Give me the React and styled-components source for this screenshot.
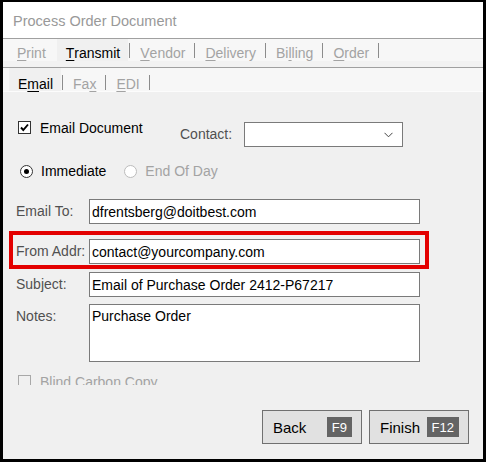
import React from 'react';
import styled, { createGlobalStyle } from 'styled-components';

const GlobalStyle = createGlobalStyle`
  html, body {
    margin: 0;
    padding: 0;
    background: #fff;
  }
  body {
    font-family: "Liberation Sans", Arial, sans-serif;
  }
`;

const Window = styled.div`
  width: 486px;
  height: 462px;
  box-sizing: border-box;
  border: 3px solid #000;
  border-top-width: 2px;
  background: #f0f0f0;
  display: flex;
  flex-direction: column;
  overflow: hidden;
  font-family: "Liberation Sans", Arial, sans-serif;
  font-size: 14px;
  color: #000;
`;

const TitleBar = styled.div`
  height: 36px;
  flex: none;
  box-sizing: border-box;
  padding: 1px 0 0 10px;
  display: flex;
  align-items: center;
  background: #fff;
  color: #999;
  font-size: 14.5px;
`;

const TabStrip = styled.div`
  flex: none;
  display: flex;
  align-items: stretch;
  height: ${(p) => p.$height}px;
  padding-left: ${(p) => p.$indent}px;
  background: #f7f7f7;
  border-top: ${(p) => (p.$topLine ? '1px solid #a0a0a0' : 'none')};
  border-bottom: ${(p) => (p.$bottomLine ? '1px solid #fcfcfc' : 'none')};
`;

const Band = styled.div`
  flex: none;
  height: 6px;
  background: #f2f2f2;
  border-bottom: 1px solid #a0a0a0;
`;

const Tab = styled.div`
  display: flex;
  align-items: center;
  padding: ${(p) => p.$top}px 8px 0 9px;
  background: ${(p) => (p.$active ? '#f0f0f0' : 'transparent')};
  color: ${(p) => (p.$active ? '#000' : '#a3a3a3')};
  white-space: nowrap;

  u {
    text-decoration-thickness: 1px;
    text-underline-offset: 2px;
  }
`;

const Sep = styled.span`
  align-self: flex-start;
  width: 1px;
  height: 15px;
  margin: ${(p) => p.$top}px 1px 0;
  background: ${(p) => (p.$hidden ? 'transparent' : '#8c8c8c')};
`;

const Content = styled.div`
  flex: none;
  height: 293px;
  box-sizing: border-box;
  overflow: hidden;
  padding: 28px 0 0 13px;
  display: flex;
  flex-direction: column;
`;

const TopRow = styled.div`
  display: flex;
  align-items: flex-start;
  height: 27px;
`;

const CheckItem = styled.label`
  display: flex;
  align-items: center;
  gap: 9px;
  width: ${(p) => (p.$width ? `${p.$width}px` : 'auto')};
  height: 15px;
  margin-left: 2px;
  color: ${(p) => (p.$disabled ? '#a3a3a3' : '#000')};
  white-space: nowrap;
`;

const Box = styled.span`
  flex: none;
  width: 13px;
  height: 13px;
  box-sizing: border-box;
  border: 1px solid ${(p) => (p.$disabled ? '#a8a8a8' : '#333')};
  background: ${(p) => (p.$disabled ? '#f0f0f0' : '#fff')};
  display: flex;
  align-items: center;
  justify-content: center;
`;

const ContactGroup = styled.div`
  display: flex;
  align-items: center;
  gap: 12px;
  margin-top: 2px;
`;

const FieldLabel = styled.span`
  color: #505050;
  white-space: nowrap;
  width: ${(p) => (p.$width ? `${p.$width}px` : 'auto')};
  flex: none;
  line-height: 25px;
`;

const Select = styled.div`
  width: 159px;
  height: 25px;
  box-sizing: border-box;
  border: 1px solid #7a7a7a;
  background: #fff;
  display: flex;
  align-items: center;
  justify-content: flex-end;
  padding-right: 9px;
`;

const RadioRow = styled.div`
  display: flex;
  align-items: center;
  height: 16px;
  margin-top: 16px;
  margin-left: 4px;
`;

const RadioItem = styled.label`
  display: flex;
  align-items: center;
  gap: 8px;
  margin-right: 18px;
  color: ${(p) => (p.$disabled ? '#a3a3a3' : '#000')};
  white-space: nowrap;
`;

const Radio = styled.span`
  flex: none;
  width: 13px;
  height: 13px;
  box-sizing: border-box;
  border-radius: 50%;
  border: 1px solid ${(p) => (p.$disabled ? '#bcbcbc' : '#333')};
  background: #fff;
  display: flex;
  align-items: center;
  justify-content: center;

  &::after {
    content: '';
    width: 5px;
    height: 5px;
    border-radius: 50%;
    background: ${(p) => (p.$checked ? '#000' : 'transparent')};
  }
`;

const FieldRow = styled.div`
  position: relative;
  display: flex;
  align-items: flex-start;
  width: 404px;
  margin-top: ${(p) => p.$gap}px;

  ${(p) =>
    p.$highlight &&
    `
    &::after {
      content: '';
      position: absolute;
      top: -8px;
      left: -7px;
      right: -9px;
      bottom: -5px;
      border: 4px solid #e30000;
      pointer-events: none;
    }
  `}
`;

const TextInput = styled.input`
  width: 331px;
  height: 25px;
  box-sizing: border-box;
  margin: 0;
  padding: 0 2px;
  border: 1px solid #7a7a7a;
  background: #fff;
  font: inherit;
  color: #000;
  outline: none;
`;

const TextArea = styled.textarea`
  width: 331px;
  height: 58px;
  box-sizing: border-box;
  margin: 0;
  padding: 3px 2px;
  border: 1px solid #7a7a7a;
  background: #fff;
  font: inherit;
  line-height: 17px;
  color: #000;
  resize: none;
  outline: none;
`;

const BccRow = styled.div`
  margin-top: 12px;
`;

const Footer = styled.div`
  flex: 1;
  display: flex;
  justify-content: flex-end;
  align-items: flex-start;
  gap: 7px;
  padding: 25px 14px 0 0;
`;

const Button = styled.button`
  width: 100px;
  height: 34px;
  box-sizing: border-box;
  margin: 0;
  padding: 0 9px 0 10px;
  border: 1px solid #707070;
  background: #e1e1e1;
  display: flex;
  align-items: center;
  justify-content: space-between;
  font-family: "Liberation Sans", Arial, sans-serif;
  font-size: 15px;
  color: #000;
`;

const Key = styled.span`
  height: 20px;
  padding: 0 5px;
  display: flex;
  align-items: center;
  background: #646464;
  color: #fff;
  font-size: 13px;
`;

const CheckMark = () => (
  <svg width="11" height="11" viewBox="0 0 11 11">
    <polyline points="2,5.5 4.3,8 9,2.5" fill="none" stroke="#000" strokeWidth="1.9" />
  </svg>
);

const Chevron = () => (
  <svg width="9" height="6" viewBox="0 0 9 6">
    <polyline points="0.5,0.8 4.5,4.8 8.5,0.8" fill="none" stroke="#444" strokeWidth="1" />
  </svg>
);

const mainTabs = [
  { pre: '', key: 'P', post: 'rint' },
  { pre: '', key: 'T', post: 'ransmit', active: true },
  { pre: '', key: 'V', post: 'endor' },
  { pre: '', key: 'D', post: 'elivery' },
  { pre: 'Bi', key: 'l', post: 'ling' },
  { pre: '', key: 'O', post: 'rder' },
];

const subTabs = [
  { pre: 'E', key: 'm', post: 'ail', active: true },
  { pre: 'Fa', key: 'x', post: '' },
  { pre: '', key: 'E', post: 'DI' },
];

function Tabs({ items, textTop, sepTop }) {
  return items.map((t, i) => {
    const nextActive = items[i + 1] && items[i + 1].active;
    return (
      <React.Fragment key={i}>
        <Tab $active={t.active} $top={textTop}>
          {t.pre}
          <u>{t.key}</u>
          {t.post}
        </Tab>
        <Sep $hidden={nextActive} $top={sepTop} />
      </React.Fragment>
    );
  });
}

export default function App() {
  return (
    <>
      <GlobalStyle />
      <Window>
        <TitleBar>Process Order Document</TitleBar>

        <TabStrip $height={22} $indent={5} $topLine>
          <Tabs items={mainTabs} textTop={6} sepTop={4} />
        </TabStrip>
        <Band />
        <TabStrip $height={23} $indent={6} $bottomLine>
          <Tabs items={subTabs} textTop={9} sepTop={7} />
        </TabStrip>

        <Content>
          <TopRow>
            <CheckItem $width={162}>
              <Box>
                <CheckMark />
              </Box>
              Email Document
            </CheckItem>
            <ContactGroup>
              <FieldLabel>Contact:</FieldLabel>
              <Select>
                <Chevron />
              </Select>
            </ContactGroup>
          </TopRow>

          <RadioRow>
            <RadioItem>
              <Radio $checked />
              Immediate
            </RadioItem>
            <RadioItem $disabled>
              <Radio $disabled />
              End Of Day
            </RadioItem>
          </RadioRow>

          <FieldRow $gap={20}>
            <FieldLabel $width={73}>Email To:</FieldLabel>
            <TextInput readOnly value="dfrentsberg@doitbest.com" />
          </FieldRow>
          <FieldRow $gap={15} $highlight>
            <FieldLabel $width={73}>From Addr:</FieldLabel>
            <TextInput readOnly value="contact@yourcompany.com" />
          </FieldRow>
          <FieldRow $gap={8}>
            <FieldLabel $width={73}>Subject:</FieldLabel>
            <TextInput readOnly value="Email of Purchase Order 2412-P67217" />
          </FieldRow>
          <FieldRow $gap={7}>
            <FieldLabel $width={73}>Notes:</FieldLabel>
            <TextArea readOnly value="Purchase Order" />
          </FieldRow>

          <BccRow>
            <CheckItem $disabled>
              <Box $disabled />
              Blind Carbon Copy
            </CheckItem>
          </BccRow>
        </Content>

        <Footer>
          <Button>
            Back
            <Key>F9</Key>
          </Button>
          <Button>
            Finish
            <Key>F12</Key>
          </Button>
        </Footer>
      </Window>
    </>
  );
}
